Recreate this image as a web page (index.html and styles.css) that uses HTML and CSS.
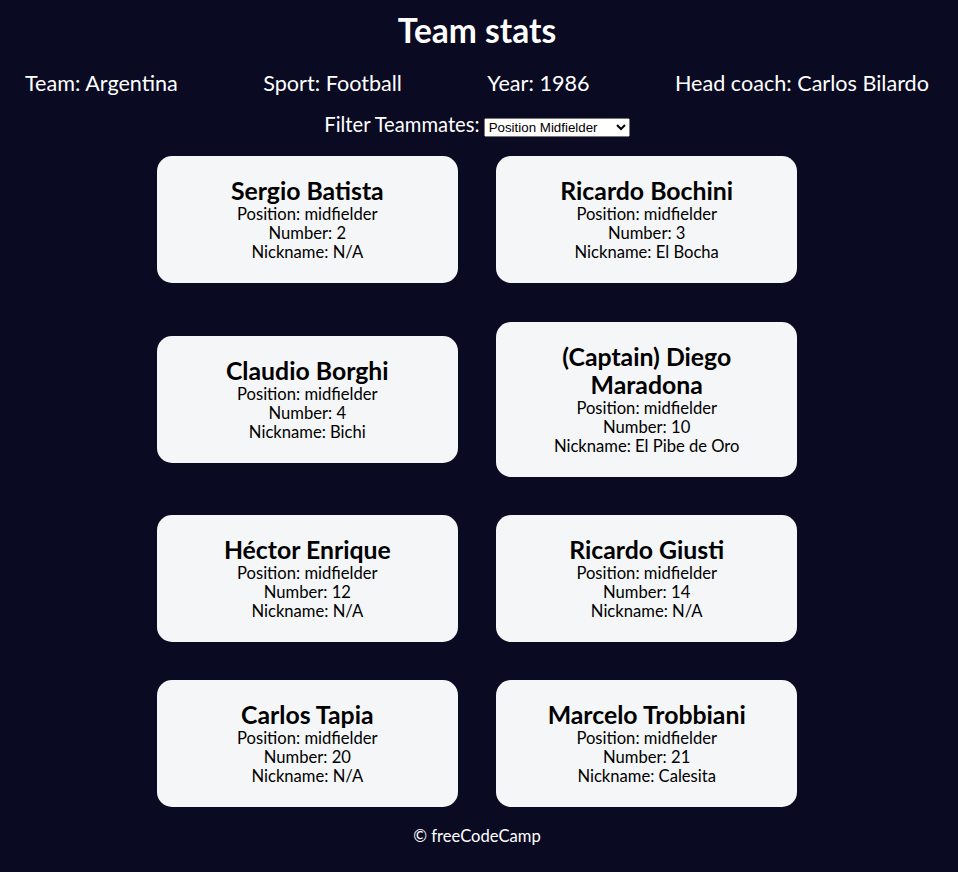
FILE: index.html
```html
<!DOCTYPE html>
<html lang="en">
<head>
    <meta charset="UTF-8">
    <meta name="viewport" content="width=device-width, initial-scale=1.0">
    <title>Football Team Cards</title>
    <link rel="stylesheet" href="styles.css">
</head>
<body>
    <header>
        <h1 class="title">Team stats</h1>
        <div class="team-stats">
            <p>Team: <span id="team">Argentina</span></p>
            <p>Sport: <span id="sport">Football</span></p>
            <p>Year: <span id="year">1986</span></p>
            <p>Head coach: <span id="head-coach">Carlos Bilardo</span></p>
        </div>
    </header>
    <main>
        <div class="filter">
            <label class="options-label" for="players">Filter Teammates:</label>
            <select name="players" id="players">
                <option value="all">All Players</option>
                <option value="nickname">Nicknames</option>
                <option value="forward">Position Forward</option>
                <option value="midfielder" selected>Position Midfielder</option>
                <option value="defender">Position Defender</option>
                <option value="goalkeeper">Position Goalkeeper</option>
            </select>
        </div>
        <div class="cards" id="player-cards">
            <div class="player-card">
                <h2>Sergio Batista</h2>
                <p>Position: midfielder</p>
                <p>Number: 2</p>
                <p>Nickname: N/A</p>
            </div>
            <div class="player-card">
                <h2>Ricardo Bochini</h2>
                <p>Position: midfielder</p>
                <p>Number: 3</p>
                <p>Nickname: El Bocha</p>
            </div>
            <div class="player-card">
                <h2>Claudio Borghi</h2>
                <p>Position: midfielder</p>
                <p>Number: 4</p>
                <p>Nickname: Bichi</p>
            </div>
            <div class="player-card">
                <h2>(Captain) Diego Maradona</h2>
                <p>Position: midfielder</p>
                <p>Number: 10</p>
                <p>Nickname: El Pibe de Oro</p>
            </div>
            <div class="player-card">
                <h2>Héctor Enrique</h2>
                <p>Position: midfielder</p>
                <p>Number: 12</p>
                <p>Nickname: N/A</p>
            </div>
            <div class="player-card">
                <h2>Ricardo Giusti</h2>
                <p>Position: midfielder</p>
                <p>Number: 14</p>
                <p>Nickname: N/A</p>
            </div>
            <div class="player-card">
                <h2>Carlos Tapia</h2>
                <p>Position: midfielder</p>
                <p>Number: 20</p>
                <p>Nickname: N/A</p>
            </div>
            <div class="player-card">
                <h2>Marcelo Trobbiani</h2>
                <p>Position: midfielder</p>
                <p>Number: 21</p>
                <p>Nickname: Calesita</p>
            </div>
        </div>
    </main>
    <footer class="footer">&copy; freeCodeCamp</footer>
</body>
</html>
```

FILE: styles.css
```css
*,
*::before,
*::after {
    box-sizing: border-box;
}

:root {
    --dark-grey: #0a0a23;
    --light-grey: #f5f6f7;
    --white: #ffffff;
    --black: #000;
}

body {
    font-family: "Trebuchet MS", Lato, sans-serif;
    background-color: var(--dark-grey);
    text-align: center;
    margin: 0 4px 0 0;
    padding: 0;
}

.title {
    color: var(--white);
    font-size: 33.5px;
    line-height: 37px;
    margin: 12px 0 0;
}

.team-stats {
    display: flex;
    justify-content: space-between;
    flex-wrap: wrap;
    padding: 0 25px;
    color: var(--white);
    font-size: 21.6px;
    line-height: 24px;
}

.team-stats p {
    margin: 22px 0 19px;
}

.filter {
    line-height: 21px;
}

.options-label {
    font-size: 20.2px;
    color: var(--white);
}

select {
    font-family: "Liberation Sans", Arial, sans-serif;
    font-size: 13.33px;
    width: 146px;
}

.cards {
    display: flex;
    flex-wrap: wrap;
    justify-content: center;
    align-items: center;
    max-width: 680px;
    margin: 0 auto;
}

.player-card {
    background-color: var(--light-grey);
    color: var(--black);
    width: 301px;
    margin: 19.2px;
    padding: 21px 20px;
    border-radius: 15px;
}

.player-card h2 {
    font-size: 24.8px;
    line-height: 28px;
    margin: 0;
}

.player-card p {
    font-size: 16.6px;
    line-height: 19px;
    margin: 0;
}

.footer {
    color: var(--white);
    font-size: 16.6px;
    line-height: 19px;
}
```
